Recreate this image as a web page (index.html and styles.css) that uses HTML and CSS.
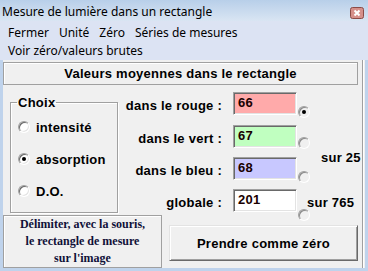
FILE: index.html
```html
<!DOCTYPE html>
<html lang="fr">
<head>
    <meta charset="UTF-8">
    <title>Mesure de lumière dans un rectangle</title>
    <link rel="stylesheet" href="styles.css">
</head>
<body>
    <div class="window">
        <div class="titlebar">
            <span class="title">Mesure de lumière dans un rectangle</span>
            <svg class="close" width="14" height="12" viewBox="0 0 14 12">
                <rect x="0.5" y="0.5" width="13" height="11" rx="2" fill="#d58f8a" stroke="#8b4b47"/>
                <path d="M4.5 3.5 L9.5 8.5 M9.5 3.5 L4.5 8.5" stroke="#fff" stroke-width="2"/>
            </svg>
        </div>
        <div class="menubar">
            <div class="menu-row">
                <span class="menu-item">Fermer</span>
                <span class="menu-item">Unité</span>
                <span class="menu-item">Zéro</span>
                <span class="menu-item">Séries de mesures</span>
            </div>
            <div class="menu-row">
                <span class="menu-item">Voir zéro/valeurs brutes</span>
            </div>
        </div>
        <div class="client">
            <div class="panel">
                <div class="heading">Valeurs moyennes dans le rectangle</div>
                <div class="middle">
                    <fieldset class="choix">
                        <legend>Choix</legend>
                        <div class="option"><span class="radio"></span>intensité</div>
                        <div class="option"><span class="radio checked"></span>absorption</div>
                        <div class="option"><span class="radio"></span>D.O.</div>
                    </fieldset>
                    <div class="values">
                        <div class="label r1">dans le rouge :</div>
                        <div class="box red r1">66</div>
                        <span class="radio checked small r1 off1"></span>

                        <div class="label r2">dans le vert :</div>
                        <div class="box green r2">67</div>
                        <span class="radio small r2 off2"></span>

                        <div class="label r3">dans le bleu :</div>
                        <div class="box blue r3">68</div>
                        <span class="radio small r3 off3"></span>

                        <div class="label r4">globale :</div>
                        <div class="box white r4">201</div>
                        <span class="radio small r4 off4"></span>

                        <div class="sur sur255">sur 25</div>
                        <div class="sur sur765">sur 765</div>
                    </div>
                </div>
                <div class="bottom">
                    <div class="hint">Délimiter, avec la souris,<br>le rectangle de mesure<br>sur l'image</div>
                    <button class="btn">Prendre comme zéro</button>
                </div>
            </div>
        </div>
    </div>
</body>
</html>
```

FILE: styles.css
```css
body {
    margin: 0;
    font-family: "Noto Sans", sans-serif;
    background-color: #f0f0f0;
}

.window {
    width: 368px;
    height: 271px;
    background-color: #bfd3ec;
    display: flex;
    flex-direction: column;
    overflow: hidden;
    padding-bottom: 3px;
    box-sizing: border-box;
}

.titlebar {
    height: 21px;
    flex: none;
    background: linear-gradient(#b8cfe9, #d9e5f3);
    display: flex;
    align-items: center;
    justify-content: space-between;
    padding: 0 4px 0 2px;
    font-size: 12px;
    color: #000;
}
.title { line-height: 16px; margin-top: 2px; }
.close { display: block; margin-top: 4px; }

.menubar {
    flex: none;
    height: 39px;
    box-sizing: border-box;
    padding: 3px 0 0 3px;
    background-color: #dce3f3;
    font-size: 12px;
}
.menu-row { display: flex; line-height: 18px; }
.menu-item { padding: 0 5px; }

.client {
    flex: 1;
    margin: 0 3px;
    background-color: #f0f0f0;
    overflow: hidden;
    display: flex;
}

.panel {
    width: 359px;
    flex: none;
    overflow: hidden;
    border-right: 1px solid #a0a0a0;
    box-shadow: 1px 0 #fff;
    padding-top: 2px;
    font-family: "Liberation Sans", Arial, sans-serif;
    font-weight: bold;
    font-size: 13px;
    letter-spacing: 0.25px;
    color: #000;
}

.heading {
    width: 355px;
    height: 23px;
    box-sizing: border-box;
    border: 1px solid #a0a0a0;
    box-shadow: inset 1px 1px #fff;
    text-align: center;
    line-height: 21px;
}

.middle {
    display: flex;
    align-items: flex-start;
}

.choix {
    flex: none;
    margin: 10px 0 2px 7px;
    padding: 0 6px;
    width: 108px;
    height: 118px;
    box-sizing: border-box;
    border: 1px solid #a0a0a0;
    box-shadow: inset 1px 1px #fff, 1px 1px #fff;
    min-width: 0;
}
.choix legend {
    padding: 0 1px;
    line-height: 15px;
}

.option {
    display: flex;
    align-items: center;
    height: 32px;
    padding-left: 1px;
}
.option:first-of-type { margin-top: 1px; }
.option .radio { margin-right: 6px; }

.radio {
    display: inline-block;
    flex: none;
    width: 12px;
    height: 12px;
    box-sizing: border-box;
    border-radius: 50%;
    border: 1px solid;
    border-color: #a0a0a0 #fff #fff #a0a0a0;
    box-shadow: inset 1px 1px #696969, inset -1px -1px #e3e3e3;
    background-color: #fff;
    position: relative;
}
.radio.checked::after {
    content: "";
    position: absolute;
    left: 3px;
    top: 3px;
    width: 4px;
    height: 4px;
    border-radius: 50%;
    background-color: #000;
}

.values {
    flex: none;
    display: grid;
    grid-template-columns: 115px 65px 12px 52px;
    grid-template-rows: 33px 32px 32px 23px;
    margin-top: 7px;
}
.r1 { grid-row: 1; }
.r2 { grid-row: 2; }
.r3 { grid-row: 3; }
.r4 { grid-row: 4; }

.label {
    grid-column: 1;
    text-align: right;
    padding-right: 11px;
    line-height: 23px;
    padding-top: 2px;
    align-self: start;
}

.box {
    grid-column: 2;
    width: 64px;
    height: 23px;
    box-sizing: border-box;
    border: 1px solid;
    border-color: #a0a0a0 #fff #fff #a0a0a0;
    box-shadow: inset 1px 1px #696969, inset -1px -1px #e3e3e3;
    padding-left: 4px;
    line-height: 20px;
    color: #1a0000;
    align-self: start;
}
.red { background-color: #ffaaaa; }
.green { background-color: #c0ffc0; }
.blue { background-color: #c8c8ff; }
.white { background-color: #fff; }

.radio.small {
    grid-column: 3;
    align-self: start;
    background-color: #f0f0f0;
    box-shadow: inset 1px 1px #8a8a8a;
}
.off1 { margin-top: 14px; }
.off2 { margin-top: 12px; }
.off3 { margin-top: 14px; }
.off4 { margin-top: 20px; }

.sur {
    grid-column: 3 / 5;
    white-space: nowrap;
    line-height: 15px;
    align-self: center;
}
.sur255 { grid-row: 2 / 4; padding-left: 23px; }
.sur765 { grid-row: 4; padding-left: 9px; padding-top: 3px; }

.bottom {
    display: flex;
    align-items: flex-start;
}

.hint {
    flex: none;
    width: 159px;
    height: 53px;
    box-sizing: border-box;
    border: 1px solid #a0a0a0;
    box-shadow: inset 1px 1px #fff;
    display: flex;
    align-items: center;
    justify-content: center;
    text-align: center;
    font-family: "Liberation Serif", "Times New Roman", serif;
    font-size: 12px;
    letter-spacing: 0;
    line-height: 17px;
    color: #101038;
}

.btn {
    flex: none;
    margin: 10px 0 0 7px;
    width: 189px;
    height: 36px;
    box-sizing: border-box;
    background-color: #f0f0f0;
    border: 1px solid;
    border-color: #e3e3e3 #696969 #696969 #e3e3e3;
    box-shadow: inset 1px 1px #fff, inset -1px -1px #a0a0a0;
    font: inherit;
    letter-spacing: 0.25px;
    color: #000;
    padding: 0;
}
```
